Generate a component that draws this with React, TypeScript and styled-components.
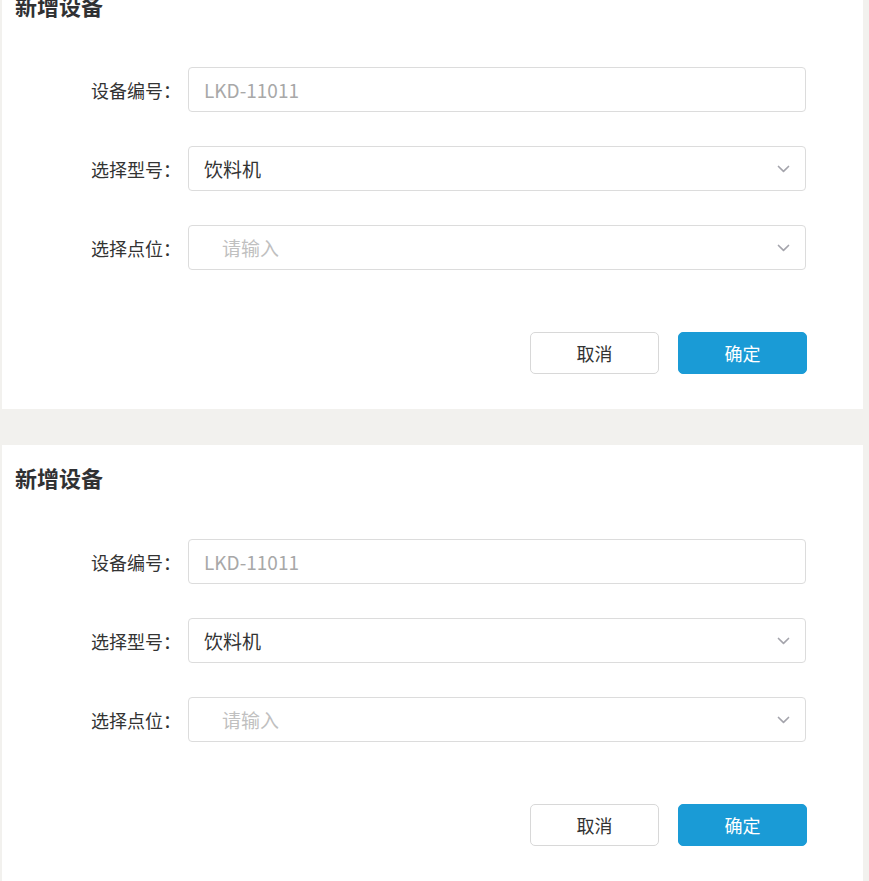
import React from "react";
import styled, { createGlobalStyle } from "styled-components";

const Global = createGlobalStyle`
  html, body {
    margin: 0;
    padding: 0;
    background: #f2f1ee;
    font-family: "Noto Sans CJK SC", "Noto Sans", sans-serif;
    overflow: hidden;
  }
`;

const Page = styled.div`
  display: flex;
  flex-direction: column;
  gap: 36px;
  margin-top: -27px;
  padding-left: 2px;
  padding-right: 6px;
`;

const Panel = styled.section`
  background: #fff;
  padding: 17px 57px 35px 0;
  display: flex;
  flex-direction: column;
`;

const Title = styled.h2`
  margin: 0 0 47px 13px;
  font-size: 22px;
  line-height: 30px;
  font-weight: 700;
  color: #303133;
`;

const Form = styled.div`
  display: grid;
  grid-template-columns: 179px 1fr;
  column-gap: 7px;
  row-gap: 34px;
  align-items: center;
`;

const Label = styled.label`
  text-align: right;
  font-size: 18px;
  color: #333;
  white-space: nowrap;
`;

const Field = styled.div<{ $indent?: boolean }>`
  height: 45px;
  box-sizing: border-box;
  border: 1px solid #dcdcdc;
  border-radius: 4px;
  display: flex;
  align-items: center;
  justify-content: space-between;
  padding: 0 15px 0 ${(p) => (p.$indent ? "33px" : "15px")};
`;

const Value = styled.span<{ $tone: "muted" | "normal" | "placeholder" }>`
  font-size: 19px;
  color: ${(p) =>
    p.$tone === "normal" ? "#333" : p.$tone === "muted" ? "#a8a8a8" : "#c0c0c0"};
`;

const Chevron = () => (
  <svg width="13" height="8" viewBox="0 0 13 8">
    <path d="M1.5 1.5 L6.5 6.3 L11.5 1.5" fill="none" stroke="#a4a4ac" strokeWidth="1.7" strokeLinecap="round" strokeLinejoin="round" />
  </svg>
);

const Actions = styled.div`
  display: flex;
  justify-content: flex-end;
  gap: 19px;
  margin-top: 62px;
  margin-right: -1px;
`;

const Button = styled.button<{ $primary?: boolean }>`
  width: 129px;
  height: 42px;
  box-sizing: border-box;
  border-radius: 5px;
  font-family: inherit;
  font-size: 18px;
  border: 1px solid ${(p) => (p.$primary ? "#1a9bd6" : "#d8d8d8")};
  background: ${(p) => (p.$primary ? "#1a9bd6" : "#fff")};
  color: ${(p) => (p.$primary ? "#fff" : "#333")};
  cursor: pointer;
`;

const DeviceForm = () => (
  <Panel>
    <Title>新增设备</Title>
    <Form>
      <Label>设备编号：</Label>
      <Field>
        <Value $tone="muted">LKD-11011</Value>
      </Field>
      <Label>选择型号：</Label>
      <Field>
        <Value $tone="normal">饮料机</Value>
        <Chevron />
      </Field>
      <Label>选择点位：</Label>
      <Field $indent>
        <Value $tone="placeholder">请输入</Value>
        <Chevron />
      </Field>
    </Form>
    <Actions>
      <Button>取消</Button>
      <Button $primary>确定</Button>
    </Actions>
  </Panel>
);

export default function App() {
  return (
    <>
      <Global />
      <Page>
        <DeviceForm />
        <DeviceForm />
      </Page>
    </>
  );
}
